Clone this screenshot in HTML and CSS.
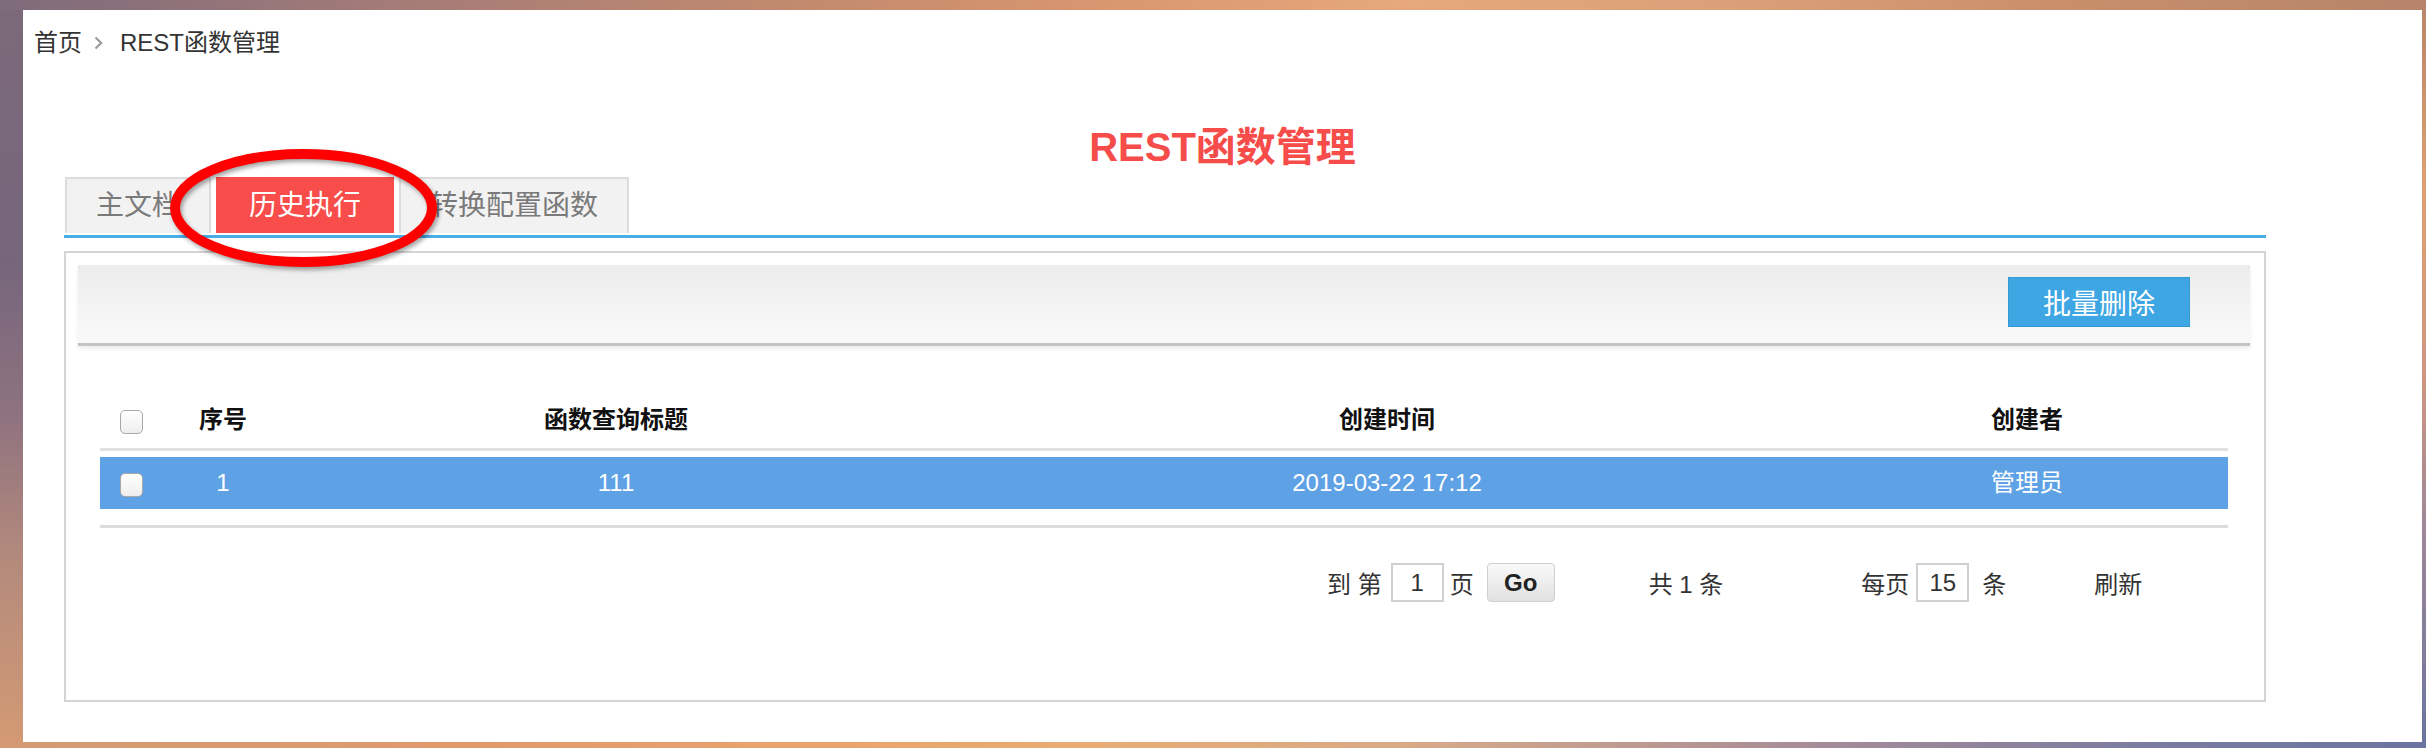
FILE: index.html
```html
<!DOCTYPE html>
<html lang="zh-CN">
<head>
<meta charset="utf-8">
<title>REST函数管理</title>
<link rel="stylesheet" href="styles.css">
</head>
<body>
<div class="page">
  <div class="crumbs">
    <span>首页</span>
    <svg class="chev" viewBox="0 0 9 14" width="9" height="14"><polyline points="1.5,1.5 7.2,7 1.5,12.5" fill="none" stroke="#9a9a9a" stroke-width="2.2"/></svg>
    <span>REST函数管理</span>
  </div>
  <h1 class="title">REST函数管理</h1>
  <div class="main">
    <div class="tabs">
      <div class="tab">主文档</div>
      <div class="tab active">历史执行</div>
      <div class="tab">转换配置函数</div>
    </div>
    <div class="panel">
      <div class="toolbar"><button class="btn-primary">批量删除</button></div>
      <div class="table">
        <div class="thead">
          <div class="cell"><span class="cb"></span></div>
          <div class="cell">序号</div>
          <div class="cell">函数查询标题</div>
          <div class="cell">创建时间</div>
          <div class="cell">创建者</div>
        </div>
        <div class="trow">
          <div class="cell"><span class="cb"></span></div>
          <div class="cell">1</div>
          <div class="cell">111</div>
          <div class="cell">2019-03-22 17:12</div>
          <div class="cell">管理员</div>
        </div>
        <div class="table-foot"></div>
      </div>
      <div class="pager">
        <span class="pg-first">到 第</span>
        <span class="pg-input pg-gap9">1</span>
        <span class="pg-gap6">页</span>
        <button class="go pg-gap13">Go</button>
        <span class="pg-gap96">共 1 条</span>
        <span class="pg-gap141">每页</span>
        <span class="pg-input pg-gap7">15</span>
        <span class="pg-gap15">条</span>
        <span class="pg-gap86">刷新</span>
      </div>
    </div>
  </div>
  <svg class="annot" width="300" height="150" viewBox="0 0 300 150">
    <ellipse cx="143.5" cy="68" rx="128.5" ry="54" fill="none" stroke="#ff0000" stroke-width="10"/>
  </svg>
</div>
</body>
</html>
```

FILE: styles.css
```css
html, body {
  margin: 0;
}

body {
  width: 2426px;
  height: 748px;
  box-sizing: border-box;
  padding: 10px 4px 6px 23px;
  overflow: hidden;
  font-family: "Liberation Sans", "Noto Sans CJK SC", sans-serif;
  background:
    linear-gradient(to right, #7e6b7b 0%, #a67c78 17%, #c28a6e 33%, #d89670 45%, #e6a87c 58%, #d9a078 72%, #c98f6c 85%, #b5846a 100%) top left / 100% 10px no-repeat,
    linear-gradient(to right, #d39b74 0%, #e19a6c 20%, #eaa56e 35%, #e8ac74 45%, #d8aa88 58%, #a68c98 75%, #7c7ca0 88%, #6a74a0 100%) bottom left / 100% 6px no-repeat,
    linear-gradient(to bottom, #7c6a7a 0%, #76667c 35%, #8e7280 55%, #b48a7c 75%, #d49a74 100%) top left / 23px 100% no-repeat,
    linear-gradient(to bottom, #b8866a 0%, #dea070 25%, #d09680 50%, #a08898 70%, #6a74a0 100%) top right / 4px 100% no-repeat,
    #c08a70;
}

.page {
  position: relative;
  height: 732px;
  background: #fff;
}

/* breadcrumb */
.crumbs {
  display: flex;
  align-items: center;
  height: 34px;
  padding: 16px 0 0 11px;
  font-size: 24px;
  line-height: 34px;
  color: #333;
}

.chev {
  margin: 0 17px 0 12px;
}

/* title */
.title {
  margin: 63px 0 0;
  text-align: center;
  font-size: 40px;
  line-height: 48px;
  font-weight: bold;
  color: #f64c4a;
}

.main {
  width: 2202px;
  margin: 6px 0 0 41px;
}

/* tabs */
.tabs {
  display: flex;
  gap: 5px;
  padding: 0 0 2px 1px;
  border-bottom: 3px solid #4aaee6;
}

.tab {
  height: 56px;
  box-sizing: border-box;
  padding: 0 29px;
  border: 2px solid #dcdcdc;
  border-bottom: none;
  background: #f2f2f2;
  color: #7a7a7a;
  font-size: 28px;
  line-height: 54px;
}

.tab.active {
  padding: 0 31px;
  background: #f84d4a;
  border-color: #f84d4a;
  color: #fff;
}

/* panel */
.panel {
  margin-top: 13px;
  height: 451px;
  box-sizing: border-box;
  border: 2px solid #d4d4d4;
  padding: 12px 14px 0 12px;
}

.toolbar {
  display: flex;
  justify-content: flex-end;
  align-items: flex-start;
  height: 81px;
  box-sizing: border-box;
  padding: 12px 60px 0 0;
  border-bottom: 3px solid #c4c4c4;
  background: linear-gradient(#ececec, #fafafa);
  box-shadow: 0 3px 4px rgba(0, 0, 0, 0.07);
}

.btn-primary {
  width: 182px;
  height: 50px;
  padding: 0;
  border: 1px solid #3597d4;
  background: #3ea6e3;
  color: #fff;
  font-family: inherit;
  font-size: 28px;
}

/* table */
.table {
  margin: 46px 22px 0;
}

.thead,
.trow {
  display: grid;
  grid-template-columns: 62px 122px 664px 878px 1fr;
  align-items: center;
  font-size: 24px;
}

.thead {
  height: 56px;
  border-bottom: 3px solid #e1e1e1;
  font-weight: bold;
  color: #111;
}

.trow {
  height: 52px;
  margin-top: 6px;
  background: #5ea1e5;
  color: #fff;
}

.cell {
  text-align: center;
  line-height: 28px;
}

.cb {
  display: inline-block;
  width: 23px;
  height: 24px;
  box-sizing: border-box;
  border: 1px solid #a9a9a9;
  border-radius: 5px;
  background: linear-gradient(#ffffff, #eeeeee);
  vertical-align: middle;
}

.table-foot {
  margin-top: 16px;
  border-top: 3px solid #dcdcdc;
}

/* pager */
.pager {
  display: flex;
  align-items: center;
  height: 39px;
  margin: 35px 22px 0;
  font-size: 24px;
  color: #333;
}

.pg-first { margin-left: 1227px; }
.pg-gap6 { margin-left: 6px; }
.pg-gap7 { margin-left: 7px; }
.pg-gap9 { margin-left: 9px; }
.pg-gap13 { margin-left: 13px; }
.pg-gap15 { margin-left: 13px; }
.pg-gap86 { margin-left: 88px; }
.pg-gap96 { margin-left: 94px; }
.pg-gap141 { margin-left: 138px; }

.pg-input {
  width: 53px;
  height: 39px;
  box-sizing: border-box;
  border: 2px solid #d0d0d0;
  text-align: center;
  line-height: 35px;
  color: #333;
}

.go {
  width: 68px;
  height: 39px;
  padding: 0;
  border: 1px solid #cfcfcf;
  border-radius: 4px;
  background: linear-gradient(#f9f9f9, #e1e1e1);
  color: #222;
  font-family: inherit;
  font-size: 24px;
  font-weight: bold;
}

/* annotation ellipse drawn over the tabs */
.annot {
  position: absolute;
  left: 137px;
  top: 130px;
  overflow: visible;
  pointer-events: none;
  filter: drop-shadow(2px 3px 2px rgba(0, 0, 0, 0.35));
}
```
